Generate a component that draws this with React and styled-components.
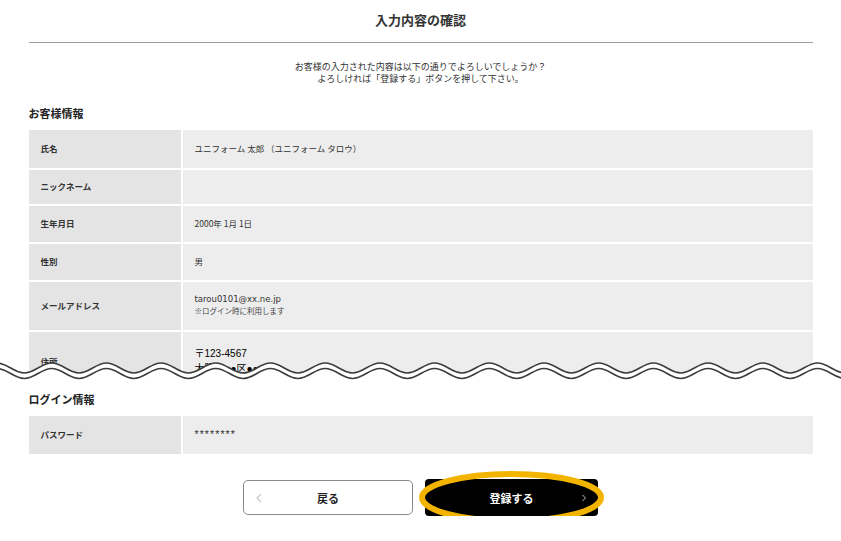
import React from "react";
import styled, { createGlobalStyle } from "styled-components";

const GlobalStyle = createGlobalStyle`
  html, body {
    margin: 0;
    padding: 0;
    background: #fff;
  }
  body {
    font-family: "Noto Sans CJK JP", "Noto Sans", sans-serif;
    color: #333;
    overflow: hidden;
  }
`;

const Inner = styled.div`
  width: 784px;
  margin: 0 auto;
`;

const Title = styled.h1`
  margin: 0;
  padding: 11px 0 13px;
  font-size: 13px;
  line-height: 18px;
  font-weight: 700;
  text-align: center;
  color: #333;
  border-bottom: 1px solid #9c9c9c;
`;

const Intro = styled.p`
  margin: 18px 0 0;
  font-size: 9px;
  line-height: 12px;
  text-align: center;
  color: #333;
`;

const Heading = styled.h2`
  margin: ${(p) => p.$top}px 0 10px;
  font-size: 11px;
  line-height: 14px;
  font-weight: 700;
  color: #222;
`;

const Table = styled.div`
  display: grid;
  row-gap: 2px;
  background: #fff;
`;

const Row = styled.div`
  display: grid;
  grid-template-columns: 152px 1fr;
  column-gap: 2px;
  min-height: ${(p) => p.$h}px;
`;

const Label = styled.div`
  display: flex;
  align-items: center;
  padding: 0 12px 2px;
  background: #e4e4e4;
  font-size: 8.5px;
  font-weight: 700;
  color: #333;
`;

const Value = styled.div`
  display: flex;
  flex-direction: column;
  justify-content: center;
  padding: 0 12px 2px;
  background: #ededed;
  font-size: 8.5px;
  line-height: 12px;
  color: #333;
`;

const Mail = styled.span`
  font-family: "DejaVu Sans", sans-serif;
  font-size: 8.5px;
`;

const Note = styled.span`
  font-size: 7.5px;
  color: #444;
`;

const Address = styled.span`
  font-family: "Liberation Sans", "Noto Sans CJK JP", sans-serif;
  font-size: 10px;
  line-height: 15px;
  font-weight: 400;
  color: #000;
`;

const Secret = styled.span`
  font-family: "Liberation Sans", sans-serif;
  font-size: 10.5px;
  letter-spacing: 1.1px;
  color: #333;
`;

const Cut = styled.section`
  position: relative;
  height: 253px;
  overflow: hidden;
`;

const WaveSvg = styled.svg`
  position: absolute;
  left: 0;
  bottom: 0;
  display: block;
`;

const Buttons = styled.div`
  display: flex;
  justify-content: center;
  align-items: center;
  gap: 12px;
  margin-top: 25px;
`;

const BackButton = styled.button`
  position: relative;
  width: 170px;
  height: 35px;
  border: 1px solid #8a8a8a;
  border-radius: 5px;
  background: #fff;
  font-family: "Noto Sans CJK JP", sans-serif;
  font-size: 11px;
  font-weight: 700;
  color: #222;
  padding: 0;
`;

const SubmitButton = styled.button`
  position: relative;
  width: 173px;
  height: 37px;
  border: none;
  border-radius: 4px;
  background: #000;
  font-family: "Noto Sans CJK JP", sans-serif;
  font-size: 11px;
  font-weight: 700;
  color: #fff;
  padding: 0;
`;

const Chevron = styled.svg`
  position: absolute;
  top: 50%;
  transform: translateY(-50%);
  ${(p) => (p.$side === "left" ? "left: 12px;" : "right: 12px;")}
`;

const Ring = styled.svg`
  position: absolute;
  left: -6px;
  top: -8px;
  pointer-events: none;
`;

const WIDTH = 841;
const PERIOD = 54.7;

function wavePath(top, bottom) {
  const half = PERIOD / 2;
  let x = -3 - PERIOD;
  let d = `M${x.toFixed(1)} ${top}`;
  let down = true;
  while (x < WIDTH + PERIOD) {
    const nx = x + half;
    const y0 = down ? top : bottom;
    const y1 = down ? bottom : top;
    d += ` C${(x + half * 0.38).toFixed(1)} ${y0} ${(nx - half * 0.38).toFixed(1)} ${y1} ${nx.toFixed(1)} ${y1}`;
    x = nx;
    down = !down;
  }
  return { d, end: x };
}

function Wave() {
  const upper = wavePath(7, 17);
  const lower = wavePath(12.5, 22.5);
  const fill = `${upper.d} L${upper.end.toFixed(1)} 27 L-60 27 Z`;
  return (
    <WaveSvg width={WIDTH} height="27" viewBox={`0 0 ${WIDTH} 27`}>
      <path d={fill} fill="#fff" />
      <path d={upper.d} fill="none" stroke="#3c3c3c" strokeWidth="1.6" />
      <path d={lower.d} fill="none" stroke="#3c3c3c" strokeWidth="1.6" />
    </WaveSvg>
  );
}

const customer = [
  { label: "氏名", h: 38, value: "ユニフォーム 太郎 （ユニフォーム タロウ）" },
  { label: "ニックネーム", h: 34, value: "" },
  { label: "生年月日", h: 36, value: "2000年 1月 1日" },
  { label: "性別", h: 36, value: "男" },
];

export default function App() {
  return (
    <>
      <GlobalStyle />
      <Inner>
        <Title>入力内容の確認</Title>
        <Intro>
          お客様の入力された内容は以下の通りでよろしいでしょうか？
          <br />
          よろしければ「登録する」ボタンを押して下さい。
        </Intro>
        <Heading $top={21}>お客様情報</Heading>
      </Inner>

      <Cut>
        <Inner>
          <Table>
            {customer.map((row) => (
              <Row key={row.label} $h={row.h}>
                <Label>{row.label}</Label>
                <Value>{row.value}</Value>
              </Row>
            ))}
            <Row $h={48}>
              <Label>メールアドレス</Label>
              <Value>
                <Mail>tarou0101@xx.ne.jp</Mail>
                <Note>※ログイン時に利用します</Note>
              </Value>
            </Row>
            <Row $h={60}>
              <Label>住所</Label>
              <Value>
                <Address>〒123-4567</Address>
                <Address>大阪市●●区●●●</Address>
              </Value>
            </Row>
          </Table>
        </Inner>
        <Wave />
      </Cut>

      <Inner>
        <Heading $top={9}>ログイン情報</Heading>
        <Table>
          <Row $h={38}>
            <Label>パスワード</Label>
            <Value>
              <Secret>********</Secret>
            </Value>
          </Row>
        </Table>

        <Buttons>
          <BackButton type="button">
            <Chevron $side="left" width="6" height="10" viewBox="0 0 6 10">
              <polyline points="5,1 1,5 5,9" fill="none" stroke="#c8c8c8" strokeWidth="1.2" />
            </Chevron>
            戻る
          </BackButton>
          <SubmitButton type="button">
            登録する
            <Chevron $side="right" width="4" height="7" viewBox="0 0 4 7">
              <polyline points="0.5,0.5 3.5,3.5 0.5,6.5" fill="none" stroke="#bbb" strokeWidth="1" />
            </Chevron>
            <Ring width="185" height="53" viewBox="0 0 185 53">
              <ellipse cx="92.5" cy="26.5" rx="89.5" ry="23.5" fill="none" stroke="#f3b400" strokeWidth="6" />
            </Ring>
          </SubmitButton>
        </Buttons>
      </Inner>
    </>
  );
}
